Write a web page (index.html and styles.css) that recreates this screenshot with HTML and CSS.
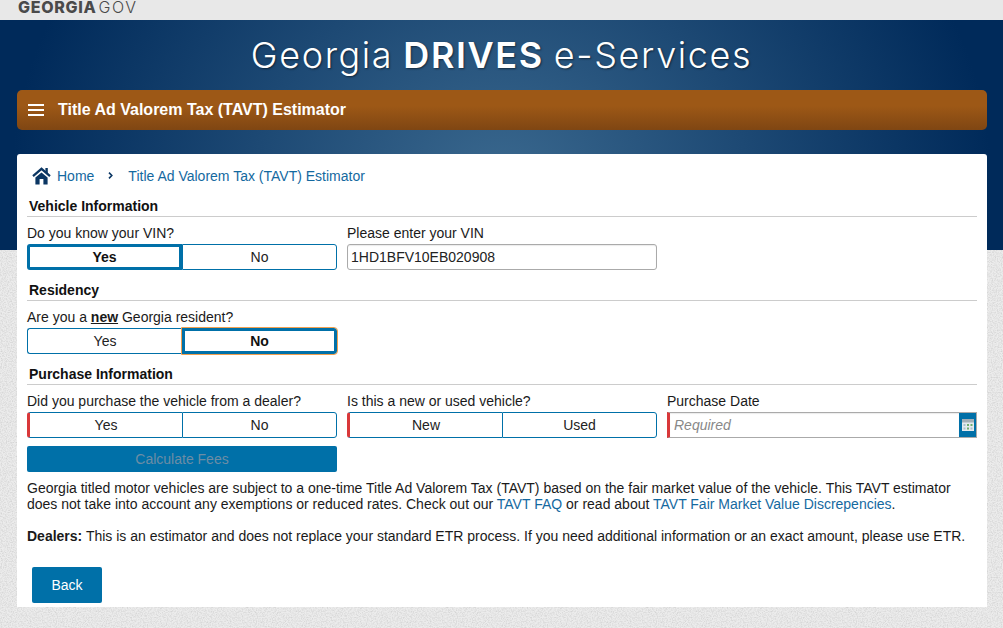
FILE: index.html

```html
<!DOCTYPE html>
<html lang="en">
<head>
    <meta charset="UTF-8">
    <meta name="viewport" content="width=device-width, initial-scale=1.0">
    <title>Title Ad Valorem Tax (TAVT) Estimator</title>
    <link rel="stylesheet" href="styles.css">
</head>
<body>

<div class="topbar"><span class="brand"><strong>GEORGIA</strong>GOV</span></div>

<div class="page">
    <h1 class="site-title">Georgia <strong>DRIVES</strong> e-Services</h1>

    <div class="navbar">
        <span class="burger"><span></span><span></span><span></span></span>
        <span class="nav-title">Title Ad Valorem Tax (TAVT) Estimator</span>
    </div>

    <div class="card">
        <div class="crumbs">
            <svg class="home-icon" viewBox="0 0 19 18" width="19" height="18">
                <path d="M1 9.2 L9.5 1.8 L18 9.2" fill="none" stroke="#0b3663" stroke-width="2.2"/>
                <path d="M13.4 1 H15.8 V6.4 L13.4 4.2 Z" fill="#0b3663"/>
                <path d="M9.5 5.4 L3.4 10.6 V17.6 H7.6 V12 H11.4 V17.6 H15.6 V10.6 Z" fill="#0b3663"/>
            </svg>
            <a href="#">Home</a>
            <svg class="crumb-sep" viewBox="0 0 5 7" width="5" height="7">
                <path d="M1 0.6 L3.8 3.5 L1 6.4" fill="none" stroke="#0b3663" stroke-width="1.6"/>
            </svg>
            <a href="#">Title Ad Valorem Tax (TAVT) Estimator</a>
        </div>

        <h2>Vehicle Information</h2>
        <div class="row">
            <div>
                <label>Do you know your VIN?</label>
                <div class="toggle">
                    <button class="selected">Yes</button>
                    <button>No</button>
                </div>
            </div>
            <div>
                <label>Please enter your VIN</label>
                <input class="text-input" type="text" value="1HD1BFV10EB020908">
            </div>
        </div>

        <h2>Residency</h2>
        <div class="row">
            <div>
                <label>Are you a <b><u>new</u></b> Georgia resident?</label>
                <div class="toggle">
                    <button>Yes</button>
                    <button class="selected focused">No</button>
                </div>
            </div>
        </div>

        <h2>Purchase Information</h2>
        <div class="row tight">
            <div>
                <label>Did you purchase the vehicle from a dealer?</label>
                <div class="toggle required">
                    <button>Yes</button>
                    <button>No</button>
                </div>
            </div>
            <div>
                <label>Is this a new or used vehicle?</label>
                <div class="toggle required">
                    <button>New</button>
                    <button>Used</button>
                </div>
            </div>
            <div>
                <label>Purchase Date</label>
                <div class="date-field">
                    <input type="text" placeholder="Required">
                    <span class="cal-btn">
                        <svg viewBox="0 0 12 12" width="12" height="12">
                            <rect x="0" y="0" width="12" height="12" fill="#e4eaee"/>
                            <rect x="0" y="0" width="12" height="3.5" fill="#a3afb7"/>
                            <rect x="1.5" y="5" width="2" height="2" fill="#a9c0cd"/>
                            <rect x="5" y="5" width="2" height="2" fill="#6fae6f"/>
                            <rect x="8.5" y="5" width="2" height="2" fill="#6fae6f"/>
                            <rect x="1.5" y="8.5" width="2" height="2" fill="#a9c0cd"/>
                            <rect x="5" y="8.5" width="2" height="2" fill="#6fae6f"/>
                            <rect x="8.5" y="8.5" width="2" height="2" fill="#a9c0cd"/>
                        </svg>
                    </span>
                </div>
            </div>
        </div>

        <div class="row calc-row">
            <button class="calc-btn" disabled>Calculate Fees</button>
        </div>

        <p>Georgia titled motor vehicles are subject to a one-time Title Ad Valorem Tax (TAVT) based on the fair market value of the vehicle. This TAVT estimator does not take into account any exemptions or reduced rates. Check out our <a href="#">TAVT FAQ</a> or read about <a href="#">TAVT Fair Market Value Discrepencies</a>.</p>
        <p><strong>Dealers:</strong> This is an estimator and does not replace your standard ETR process. If you need additional information or an exact amount, please use ETR.</p>

        <button class="back-btn">Back</button>
    </div>
</div>

</body>
</html>
```

FILE: styles.css

```css
* {
    box-sizing: border-box;
}
html, body {
    margin: 0;
    padding: 0;
}
body {
    font-family: "Liberation Sans", Arial, sans-serif;
    font-size: 14px;
    color: #1a1a1a;
    background-color: #ececec;
    background-image: url("data:image/svg+xml,%3Csvg xmlns='http://www.w3.org/2000/svg' width='200' height='200'%3E%3Cfilter id='n'%3E%3CfeTurbulence type='fractalNoise' baseFrequency='0.8' numOctaves='2'/%3E%3CfeColorMatrix values='0 0 0 0 0.45 0 0 0 0 0.45 0 0 0 0 0.45 0.9 0 0 0 -0.34'/%3E%3C/filter%3E%3Crect width='200' height='200' filter='url(%23n)'/%3E%3C/svg%3E");
}
a {
    color: #14699f;
    text-decoration: none;
}

.topbar {
    height: 20px;
    background-color: #e8e8e8;
    padding-left: 18px;
}
.brand {
    font-family: Inter, sans-serif;
    font-size: 16px;
    line-height: 14px;
    display: block;
    font-weight: 300;
    letter-spacing: 1.6px;
    color: #4a4a4a;
}
.brand strong {
    font-weight: 800;
    letter-spacing: 0.7px;
    margin-right: 2px;
}

.page {
    padding-bottom: 21px;
    background: radial-gradient(ellipse 490px 420px at 50% 70%, #3a688e, #002a5a 100%) no-repeat top / 100% 230px;
}
.site-title {
    margin: 0;
    height: 70px;
    display: flex;
    align-items: center;
    justify-content: center;
    gap: 0.28em;
    font-family: Inter, sans-serif;
    font-size: 36px;
    font-weight: 300;
    letter-spacing: 1.6px;
    color: #fff;
    text-shadow: 1px 1px 2px rgba(0, 0, 0, 0.5);
}
.site-title strong {
    font-weight: 600;
}

.navbar {
    height: 40px;
    margin: 0 16px 0 17px;
    padding-left: 11px;
    display: flex;
    align-items: center;
    border-radius: 5px;
    background: linear-gradient(#9d5816 40%, #7f4613);
    color: #fff;
}
.burger {
    width: 16px;
    margin-right: 14px;
}
.burger span {
    display: block;
    height: 2px;
    background: #fff;
    margin: 3px 0;
}
.nav-title {
    font-size: 16px;
    font-weight: bold;
}

.card {
    margin: 24px 16px 0 17px;
    padding: 6px 10px 4px;
    height: 453px;
    background-color: #fff;
    border-radius: 3px 3px 0 0;
}
.crumbs {
    height: 32px;
    margin-bottom: 4px;
    padding-left: 5px;
    display: flex;
    align-items: center;
}
.home-icon {
    margin-right: 6px;
}
.crumb-sep {
    margin: 0 15px 2px 14px;
}

h2 {
    margin: 0 0 6px;
    height: 21px;
    padding-left: 2px;
    font-size: 14px;
    line-height: 20px;
    font-weight: bold;
    color: #111;
    border-bottom: 1px solid #ccc;
}
.row {
    display: grid;
    grid-template-columns: repeat(3, 310px);
    gap: 10px;
    margin-bottom: 10px;
}
.row.tight {
    margin-bottom: 8px;
}
label {
    display: block;
    line-height: 20px;
    margin-bottom: 1px;
}

.toggle {
    display: flex;
    height: 26px;
}
.toggle button {
    width: 50%;
    flex: none;
    font: inherit;
    color: #222;
    background: #fff;
    border: 1px solid #0070a8;
    padding: 0;
}
.toggle button:first-child {
    border-radius: 3px 0 0 3px;
    border-right: 0;
}
.toggle button:last-child {
    border-radius: 0 3px 3px 0;
}
.toggle button.selected {
    font-weight: bold;
    color: #111;
    border: 3px solid #0070a8;
}
.toggle button.focused {
    outline: 1px solid #f0a050;
}
.toggle.required button:first-child {
    border-left: 3px solid #d9383a;
}

.text-input {
    width: 100%;
    height: 26px;
    padding: 0 3px;
    font: inherit;
    color: #222;
    border: 1px solid #aaa;
    border-radius: 3px;
    box-shadow: inset 0 1px 1px rgba(0, 0, 0, 0.08);
}
.date-field {
    display: flex;
    height: 26px;
    border: 1px solid #aaa;
    border-left: 3px solid #d9383a;
}
.date-field input {
    flex: 1;
    min-width: 0;
    border: 0;
    padding: 0 4px;
    font: inherit;
    box-shadow: inset 0 1px 1px rgba(0, 0, 0, 0.08);
}
.date-field input::placeholder {
    font-style: italic;
    color: #888;
}
.cal-btn {
    width: 17px;
    background-color: #0070a8;
    display: flex;
    align-items: center;
    justify-content: center;
}

.calc-row {
    margin-bottom: 8px;
}
.calc-btn {
    height: 26px;
    font: inherit;
    color: #6c8da5;
    background-color: #0070a8;
    border: 0;
    border-radius: 2px;
}

p {
    margin: 0 0 16px;
    line-height: 16px;
}
.back-btn {
    display: block;
    width: 70px;
    height: 36px;
    margin: 23px 0 0 5px;
    font: inherit;
    color: #fff;
    background-color: #0070a8;
    border: 0;
    border-radius: 2px;
}
```
